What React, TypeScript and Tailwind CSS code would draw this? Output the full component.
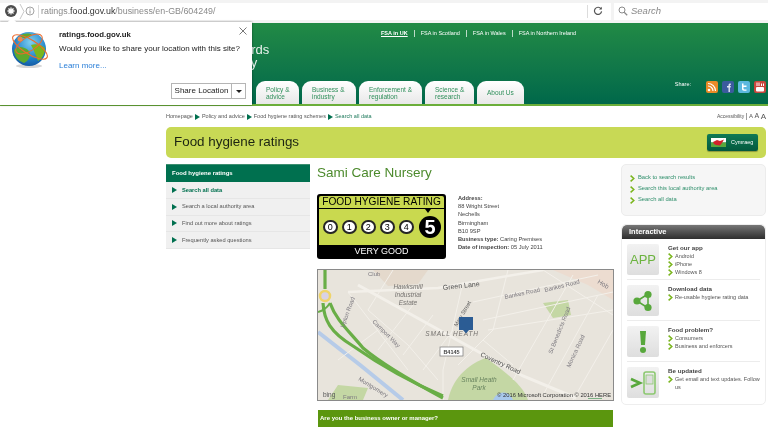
import React from "react";

function Arrow({ className = "" }: { className?: string }) {
	return (
		<svg width="5" height="6" viewBox="0 0 5 6" className={`shrink-0 ${className}`}>
			<path d="M0 0 L5 3 L0 6 Z" fill="#00704f" />
		</svg>
	);
}

function Chevron() {
	return (
		<svg width="5" height="7" viewBox="0 0 5 7" className="shrink-0 mt-px">
			<path d="M0.6 0.6 L3.8 3.5 L0.6 6.4" fill="none" stroke="#7ab51d" strokeWidth="1.5" />
		</svg>
	);
}

function Globe() {
	return (
		<svg width="40" height="42" viewBox="0 0 40 42">
			<defs>
				<radialGradient id="sea" cx="0.55" cy="0.3" r="0.8">
					<stop offset="0" stopColor="#7fd0f0" />
					<stop offset="0.6" stopColor="#1f7fc8" />
					<stop offset="1" stopColor="#0f4c94" />
				</radialGradient>
			</defs>
			<ellipse cx="20" cy="38" rx="13" ry="2" fill="#d5d5d5" />
			<circle cx="20" cy="21" r="17" fill="url(#sea)" />
			<path d="M5 22 C10 17 15 19 19 22 C23 26 20 33 15 35 C9 33 5 28 5 22 Z" fill="#5da92d" />
			<path d="M22 17 C27 15 33 17 36 20 C36 26 33 31 29 33 C27 28 25 22 22 17 Z" fill="#7ab51d" />
			<path d="M11 8 C15 5 20 5 23 7 C20 10 15 12 11 8 Z" fill="#5da92d" />
			<ellipse cx="21" cy="19" rx="20" ry="7" transform="rotate(32 21 19)" fill="none" stroke="#ee6a2c" strokeWidth="1.1" />
			<ellipse cx="20" cy="16" rx="15" ry="7" transform="rotate(-32 20 16)" fill="none" stroke="#ee6a2c" strokeWidth="1" />
			<circle cx="11" cy="11" r="2.5" fill="#ee8a4c" />
		</svg>
	);
}

function BrowserBar() {
	return (
		<div className="h-[23px] bg-[#f3f3f3] flex items-center gap-[3px] pb-px">
			<div className="flex-1 h-[17px] bg-white flex items-center">
				<svg width="14" height="14" viewBox="0 0 14 14" className="ml-[4px]">
					<circle cx="7" cy="7" r="6" fill="#4d4d4d" />
					<path d="M4.5 4.5 L9.5 9.5 M9.5 4.5 L4.5 9.5 M7 3.5 V10.5 M3.5 7 H10.5" stroke="#fff" strokeWidth="1.3" />
				</svg>
				<svg width="6" height="17" viewBox="0 0 6 17" className="ml-px">
					<path d="M1 1 L5 8.5 L1 16" fill="none" stroke="#c8c8c8" />
				</svg>
				<svg width="10" height="10" viewBox="0 0 10 10">
					<circle cx="5" cy="5" r="4" fill="none" stroke="#9a9a9a" strokeWidth="0.9" />
					<path d="M5 4.4 V7.6 M5 2.4 V3.5" stroke="#9a9a9a" strokeWidth="1" />
				</svg>
				<div className="w-px h-[13px] bg-[#dcdcdc] ml-[3px]" />
				<span className="ml-[2px] text-[8.9px] text-[#8a8a8a] leading-none">
					ratings.<span className="text-[#333]">food.gov.uk</span>/business/en-GB/604249/
				</span>
				<div className="ml-auto w-px h-[13px] bg-[#dcdcdc]" />
				<svg width="10" height="10" viewBox="0 0 10 10" className="ml-[5px] mr-[8px]">
					<path d="M8 2.8 A3.6 3.6 0 1 0 8.6 5.4" fill="none" stroke="#555" strokeWidth="1.2" />
					<path d="M8.8 0.8 V3.6 H6 Z" fill="#555" />
				</svg>
			</div>
			<div className="w-[154px] h-[17px] bg-white flex items-center pl-[4px] gap-[3px]">
				<svg width="10" height="10" viewBox="0 0 10 10">
					<circle cx="4" cy="4" r="3" fill="none" stroke="#8a8a8a" strokeWidth="1" />
					<path d="M6.2 6.2 L9.2 9.2" stroke="#8a8a8a" strokeWidth="1.3" />
				</svg>
				<span className="text-[9.5px] italic text-[#8a8a8a] leading-none">Search</span>
			</div>
		</div>
	);
}

function LocationPopup() {
	return (
		<div className="absolute left-0 top-[22px] w-[252px] h-[83px] bg-white shadow-[0_0_2px_rgba(0,0,0,0.5)] text-[#222]">
			<div className="absolute left-[9px] -top-[3px] w-[6px] h-[6px] bg-white rotate-45" />
			<div className="absolute left-[9px] top-[6px]">
				<Globe />
			</div>
			<svg width="8" height="8" viewBox="0 0 8 8" className="absolute right-[5px] top-[5px]">
				<path d="M0.5 0.5 L7.5 7.5 M7.5 0.5 L0.5 7.5" stroke="#555" strokeWidth="0.8" />
			</svg>
			<p className="absolute left-[59px] top-[8px] text-[7.8px] font-bold leading-[10px] whitespace-nowrap">ratings.food.gov.uk</p>
			<p className="absolute left-[59px] top-[21px] text-[8px] leading-[11px] whitespace-nowrap">Would you like to share your location with this site?</p>
			<p className="absolute left-[59px] top-[38px] text-[8px] leading-[11px] text-[#2a7fd8]">Learn more...</p>
			<div className="absolute left-[171px] top-[61px] w-[75px] h-[16px] border border-[#b5b5b5] bg-white flex items-center">
				<span className="flex-1 text-center text-[8px] leading-none border-r border-[#b5b5b5] h-full flex items-center justify-center">Share Location</span>
				<span className="w-[13px] flex justify-center">
					<svg width="6" height="3" viewBox="0 0 6 3">
						<path d="M0 0 H6 L3 3 Z" fill="#222" />
					</svg>
				</span>
			</div>
		</div>
	);
}

function Tab({ children, width }: { children: React.ReactNode; width: string }) {
	return (
		<div className={`${width} h-[23px] rounded-t-[9px] bg-gradient-to-b from-white to-[#e8e8e8] text-[#2f8f5b] text-[6.5px] leading-[7px] flex flex-col justify-center pl-[10px]`}>
			{children}
		</div>
	);
}

function Social() {
	return (
		<div className="flex gap-[4px] mr-[2px]">
			<svg width="12" height="12" viewBox="0 0 12 12" className="rounded-[2px] bg-[#e98b27]">
				<circle cx="3" cy="9" r="1.3" fill="#fff" />
				<path d="M2 5 A5 5 0 0 1 7 10 M2 2.5 A7.5 7.5 0 0 1 9.5 10" fill="none" stroke="#fff" strokeWidth="1.2" />
			</svg>
			<svg width="12" height="12" viewBox="0 0 12 12" className="rounded-[2px] bg-[#3b5b9e]">
				<path d="M6.5 11 V6.5 H5 V5 H6.5 V4 C6.5 3 7.2 2.4 8.8 2.5 V4 C8 4 7.9 4.2 7.9 4.6 V5 H8.8 L8.6 6.5 H7.9 V11 Z" fill="#dfe7f5" />
			</svg>
			<svg width="12" height="12" viewBox="0 0 12 12" className="rounded-[2px] bg-[#5cb8de]">
				<path d="M4 2.5 H5.5 V4.5 H8.5 V6 H5.5 V7.5 C5.5 8.3 6 8.6 8.5 8.4 V9.8 H6 C4.6 9.8 4 9 4 7.8 Z" fill="#fff" />
			</svg>
			<svg width="12" height="12" viewBox="0 0 12 12" className="rounded-[2px] bg-[#c9463d]">
				<rect x="2" y="6" width="8" height="4.5" rx="1" fill="#fff" />
				<path d="M3 1.5 V5 M5 1.5 V5 M7.5 2.5 V5 M9.5 2.5 V5" stroke="#fff" strokeWidth="1" />
			</svg>
		</div>
	);
}

function Header() {
	const links = ["FSA in UK", "FSA in Scotland", "FSA in Wales", "FSA in Northern Ireland"];
	return (
		<div className="relative h-[83px] bg-gradient-to-b from-[#218a45] to-[#00684a] border-b-2 border-[#6bae3a] flex flex-col justify-between pl-[256px] text-white">
			{/* logo sits mostly under the location popup */}
			<div className="absolute left-[210px] top-[20px] text-[13px] leading-[13px] text-white/90">
				<p>Standards</p>
				<p className="pl-[4px]">Agency</p>
			</div>
			<div className="flex pt-[7px] pl-[125px] text-[5.5px] leading-[7px]">
				{links.map((l, i) => (
					<span key={l} className={i === 0 ? "font-bold underline pr-[6px] border-r border-white/70" : i === 3 ? "pl-[6px]" : "px-[6px] border-r border-white/70"}>
						{l}
					</span>
				))}
			</div>
			<div className="flex items-end gap-[3px]">
				<Tab width="w-[43px]">
					<span>Policy &amp;</span>
					<span>advice</span>
				</Tab>
				<Tab width="w-[54px]">
					<span>Business &amp;</span>
					<span>industry</span>
				</Tab>
				<Tab width="w-[63px]">
					<span>Enforcement &amp;</span>
					<span>regulation</span>
				</Tab>
				<Tab width="w-[49px]">
					<span>Science &amp;</span>
					<span>research</span>
				</Tab>
				<Tab width="w-[47px]">
					<span>About Us</span>
				</Tab>
				<div className="ml-auto flex items-start gap-[15px] self-start">
					<span className="text-[5.5px] leading-[7px]">Share:</span>
					<Social />
				</div>
			</div>
		</div>
	);
}

function Sidebar() {
	const rows = ["Search all data", "Search a local authority area", "Find out more about ratings", "Frequently asked questions"];
	return (
		<div className="w-[144px] shrink-0">
			<div className="h-[18px] bg-[#00704f] border-t border-[#3d8f70] text-white text-[6px] font-bold flex items-center pl-[6px]">
				Food hygiene ratings
			</div>
			{rows.map((r, i) => (
				<div key={r} className="h-[16.75px] bg-[#f0f0f0] border-b border-[#e6e6e6] flex items-center gap-[5px] pl-[6px] text-[5.7px]">
					<Arrow />
					<span className={i === 0 ? "text-[#00704f] font-bold" : "text-[#555]"}>{r}</span>
				</div>
			))}
		</div>
	);
}

function RatingBadge() {
	return (
		<div className="w-[129px] h-[65px] shrink-0 bg-black rounded-[3px] p-[2px] flex flex-col">
			<div className="h-[12px] bg-[#c9d94f] text-[10.2px] leading-[12px] text-center text-black whitespace-nowrap rounded-t-[2px]">FOOD HYGIENE RATING</div>
			<div className="relative h-[36px] mt-px bg-[#c9d94f] flex items-center pl-[4px] gap-[4.5px]">
				{[0, 1, 2, 3, 4].map((n) => (
					<span key={n} className="w-[14.5px] h-[14.5px] rounded-full bg-white border-2 border-black/85 text-[9px] flex items-center justify-center leading-none">
						{n}
					</span>
				))}
				<span className="ml-[1px] w-[22px] h-[22px] rounded-full bg-black text-white text-[20px] font-bold flex items-center justify-center leading-none">5</span>
				<svg width="6" height="4" viewBox="0 0 6 4" className="absolute right-[13px] top-0">
					<path d="M0 0 H6 L3 4 Z" fill="#000" />
				</svg>
			</div>
			<div className="flex-1 text-white text-[9px] flex items-center justify-center leading-none">VERY GOOD</div>
		</div>
	);
}

function MapPanel() {
	const road = "#f3f0ea";
	return (
		<div className="w-[297px] h-[132px] border border-[#8a8a8a]">
			<svg width="295" height="130" viewBox="0 0 295 130" className="block font-['Liberation_Sans',sans-serif]">
				<rect width="295" height="130" fill="#e8e4dc" />
				<path d="M55 0 H110 L100 14 L70 16 Z" fill="#e4d9cc" />
				<path d="M235 0 H295 V30 L270 15 Z" fill="#ecdcd0" />
				<path d="M130 130 C135 105 155 92 168 88 C185 100 205 115 210 130 Z" fill="#c4d7a4" />
				<path d="M225 33 L250 30 L253 45 L235 48 Z" fill="#c4d7a4" />
				<path d="M10 130 L20 115 L50 118 L45 130 Z" fill="#c4d7a4" />
				<path d="M0 62 C30 85 55 105 85 130" fill="none" stroke="#b6cbe8" strokeWidth="4" />
				<path d="M175 130 C178 122 190 118 195 130 Z" fill="#a8c8ec" />
				<g fill="none" stroke={road} strokeWidth="1">
					<path d="M30 22 L120 18 L225 0" strokeWidth="2.5" />
					<path d="M40 15 L159 81 L205 106 L258 128" strokeWidth="3" />
					<path d="M145 12 L125 100 L125 130" />
					<path d="M190 0 L175 60 L140 95" />
					<path d="M155 32 L280 5" />
					<path d="M165 50 L295 22" />
					<path d="M170 60 L295 40" />
					<path d="M255 5 L195 110" />
					<path d="M280 25 L225 125" />
					<path d="M295 60 L255 130" />
					<path d="M225 0 L295 45" />
					<path d="M75 0 L50 40 L90 75 L120 110" />
					<path d="M30 22 L90 100" />
					<path d="M60 60 L20 90" />
					<path d="M95 35 L60 80" />
					<path d="M115 45 L85 85" />
					<path d="M135 60 L105 100" />
					<path d="M165 70 L195 95" />
				</g>
				<g fill="none" stroke="#69ae47" strokeWidth="3.2">
					<path d="M5 33 C6 50 12 62 35 76 C55 90 85 109 125 126" />
					<path d="M12 33 C18 50 30 60 45 78 C65 95 95 112 125 128" />
					<path d="M0 42 C8 40 10 36 12 33" strokeWidth="2" />
					<path d="M7 0 V19" />
				</g>
				<circle cx="7" cy="26" r="5" fill="#d9d2e4" stroke="#efd46a" strokeWidth="2.5" />
				<g fill="#7d7a80" fontSize="6">
					<text x="50" y="6">Club</text>
					<text x="125" y="20" fontSize="7" transform="rotate(-6 125 20)" fill="#555">Green Lane</text>
					<text x="187" y="29" transform="rotate(-12 187 29)">Bankes Road</text>
					<text x="227" y="22" transform="rotate(-14 227 22)">Bankes Road</text>
					<text x="279" y="13" fontSize="6.5" transform="rotate(30 279 13)">Hob</text>
					<text x="54" y="52" fontSize="6" transform="rotate(45 54 52)">Camport Way</text>
					<text x="26" y="58" transform="rotate(-70 26 58)">Upton Road</text>
					<text x="162" y="86" fontSize="6.5" fill="#4a4a4a" transform="rotate(25 162 86)">Coventry Road</text>
					<text x="234" y="84" transform="rotate(-68 234 84)">St Benedicts Road</text>
					<text x="252" y="98" transform="rotate(-65 252 98)">Monica Road</text>
					<text x="40" y="110" transform="rotate(32 40 110)">Montgomery</text>
					<text x="25" y="129" fontSize="6">Farm</text>
					<text x="139" y="57" fontSize="5.5" transform="rotate(-60 139 57)" fill="#555">Mary Street</text>
				</g>
				<g fontStyle="italic" fill="#75726f" fontSize="6.5" textAnchor="middle">
					<text x="90" y="19">Hawksmill</text>
					<text x="90" y="27">Industrial</text>
					<text x="90" y="35">Estate</text>
					<text x="161" y="112" fill="#6a8560">Small Heath</text>
					<text x="161" y="120" fill="#6a8560">Park</text>
					<text x="134" y="66" letterSpacing="0.8">SMALL HEATH</text>
				</g>
				<rect x="122" y="77" width="23" height="9" fill="#fff" stroke="#777" strokeWidth="0.7" />
				<text x="133.5" y="84" fontSize="5.5" fontWeight="bold" fill="#444" textAnchor="middle">B4145</text>
				<path d="M141 47 H155 V60 H151 L148 63.5 L145 60 H141 Z" fill="#2b5c94" />
				<text x="5" y="127" fontSize="6.5" fill="#555">bing</text>
				<text x="293" y="127" fontSize="5.8" fill="#333" textAnchor="end">© 2016 Microsoft Corporation © 2016 HERE</text>
				<path d="M270 128.5 H284" stroke="#4a9a5a" strokeWidth="0.7" />
			</svg>
		</div>
	);
}

function MainColumn() {
	return (
		<div className="w-[297px] shrink-0">
			<h2 className="text-[13.5px] leading-[18px] text-[#4c8a2c]">Sami Care Nursery</h2>
			<div className="flex mt-[12px]">
				<RatingBadge />
				<div className="ml-[12px] text-[5.7px] leading-[8.2px] text-[#444]">
					<p className="font-bold">Address:</p>
					<p>88 Wright Street</p>
					<p>Nechells</p>
					<p>Birmingham</p>
					<p>B10 9SP</p>
					<p>
						<b>Business type:</b> Caring Premises
					</p>
					<p>
						<b>Date of inspection:</b> 05 July 2011
					</p>
				</div>
			</div>
			<div className="mt-[10px]">
				<MapPanel />
			</div>
			<div className="mt-[9px] h-[17px] ml-px w-[295px] bg-[#5b960e] text-white text-[6px] font-bold flex items-center pl-[2px]">
				Are you the business owner or manager?
			</div>
		</div>
	);
}

function AppIcon({ children }: { children: React.ReactNode }) {
	return (
		<div className="w-[32px] h-[31px] shrink-0 rounded-[2px] bg-gradient-to-b from-[#f2f2f2] to-[#dedede] flex items-center justify-center">
			{children}
		</div>
	);
}

function InteractiveItem({ icon, title, links }: { icon: React.ReactNode; title: string; links: string[] }) {
	return (
		<div className="flex gap-[9px] h-[41px] pt-[5px] border-b border-[#ececec] last:border-b-0">
			<AppIcon>{icon}</AppIcon>
			<div className="min-w-0 text-[#555] text-[5.5px] leading-[8px]">
				<p className="font-bold text-[6.2px] text-[#444]">{title}</p>
				{links.map((l) => (
					<div key={l} className="flex gap-[2px]">
						<Chevron />
						<span>{l}</span>
					</div>
				))}
			</div>
		</div>
	);
}

function RightColumn() {
	return (
		<div className="w-[145px] shrink-0">
			<div className="h-[52px] rounded-[5px] bg-[#f6f6f6] border border-[#ececec] pl-[8px] pt-[7px] text-[5.8px] leading-[11px] text-[#2f8f6b]">
				{["Back to search results", "Search this local authority area", "Search all data"].map((l) => (
					<div key={l} className="flex items-center gap-[3px]">
						<Chevron />
						<span>{l}</span>
					</div>
				))}
			</div>
			<div className="mt-[8px] h-[181px] rounded-[5px] border border-[#eeeeee] overflow-hidden">
				<div className="h-[14px] bg-gradient-to-b from-[#777] to-[#2e2e2e] text-white text-[7.5px] font-bold flex items-center pl-[7px] rounded-t-[5px]">
					Interactive
				</div>
				<div className="px-[5px]">
					<InteractiveItem
						icon={<span className="text-[#6cb33f] text-[13px] leading-none">APP</span>}
						title="Get our app"
						links={["Android", "iPhone", "Windows 8"]}
					/>
					<InteractiveItem
						icon={
							<svg width="22" height="22" viewBox="0 0 22 22">
								<path d="M5 11 L16 4 V18 Z" fill="none" stroke="#58a83c" strokeWidth="1.6" />
								<circle cx="5" cy="11" r="3.6" fill="#58a83c" />
								<circle cx="16" cy="4.5" r="3.6" fill="#58a83c" />
								<circle cx="16" cy="17.5" r="3.6" fill="#58a83c" />
							</svg>
						}
						title="Download data"
						links={["Re-usable hygiene rating data"]}
					/>
					<InteractiveItem
						icon={
							<svg width="10" height="22" viewBox="0 0 10 22">
								<path d="M2 0 H8 L7 14 H3 Z" fill="#58a83c" />
								<circle cx="5" cy="19" r="3" fill="#58a83c" />
							</svg>
						}
						title="Food problem?"
						links={["Consumers", "Business and enforcers"]}
					/>
					<InteractiveItem
						icon={
							<svg width="26" height="24" viewBox="0 0 26 24">
								<path d="M1 8 L10 12 L1 16" fill="none" stroke="#58a83c" strokeWidth="2.6" />
								<rect x="14" y="1" width="11" height="22" rx="2" fill="none" stroke="#8cc870" strokeWidth="1.6" />
								<rect x="16" y="4" width="7" height="9" fill="#dedede" stroke="#8cc870" strokeWidth="0.8" />
							</svg>
						}
						title="Be updated"
						links={["Get email and text updates. Follow us"]}
					/>
				</div>
			</div>
		</div>
	);
}

export default function App() {
	return (
		<div className="relative w-[768px] h-[431px] overflow-hidden bg-white font-['Liberation_Sans',sans-serif] blur-[0.4px]">
			<BrowserBar />
			<Header />
			<LocationPopup />
			<div className="pl-[166px] pr-[2px]">
				<div className="flex justify-between items-center h-[21px] text-[5.5px] text-[#555]">
					<div className="flex items-center gap-[2px]">
						<span>Homepage</span>
						<Arrow />
						<span>Policy and advice</span>
						<Arrow />
						<span>Food hygiene rating schemes</span>
						<Arrow />
						<span className="text-[#1f7a5c]">Search all data</span>
					</div>
					<div className="flex items-center gap-[1.5px]">
						<span className="text-[5px]">Accessibility</span>
						<span className="text-[7px]">|</span>
						<span className="text-[6px]">A</span>
						<span className="text-[7px]">A</span>
						<span className="text-[8px]">A</span>
					</div>
				</div>
				<div className="h-[31px] rounded-[5px] bg-[#c8d955] flex items-center justify-between pl-[8px] pr-[8px]">
					<h1 className="text-[13.4px] text-[#1c2412]">Food hygiene ratings</h1>
					<div className="w-[51px] h-[17px] rounded-[2px] bg-gradient-to-b from-[#0f7a55] to-[#04593e] flex items-center gap-[5px] pl-[4px] shadow-[0_1px_1px_rgba(0,0,0,0.3)]">
						<svg width="15" height="9" viewBox="0 0 15 9">
							<rect width="15" height="4.5" fill="#fff" />
							<rect y="4.5" width="15" height="4.5" fill="#5aa83c" />
							<path d="M2 4 L6 2 L9 3 L13 1.5 L11 5 L9 7.5 L5 7 L3 6 Z" fill="#d1232a" />
						</svg>
						<span className="text-white text-[5.5px]">Cymraeg</span>
					</div>
				</div>
				<div className="flex mt-[6px]">
					<Sidebar />
					<div className="ml-[7px]">
						<MainColumn />
					</div>
					<div className="ml-[7px]">
						<RightColumn />
					</div>
				</div>
			</div>
		</div>
	);
}
